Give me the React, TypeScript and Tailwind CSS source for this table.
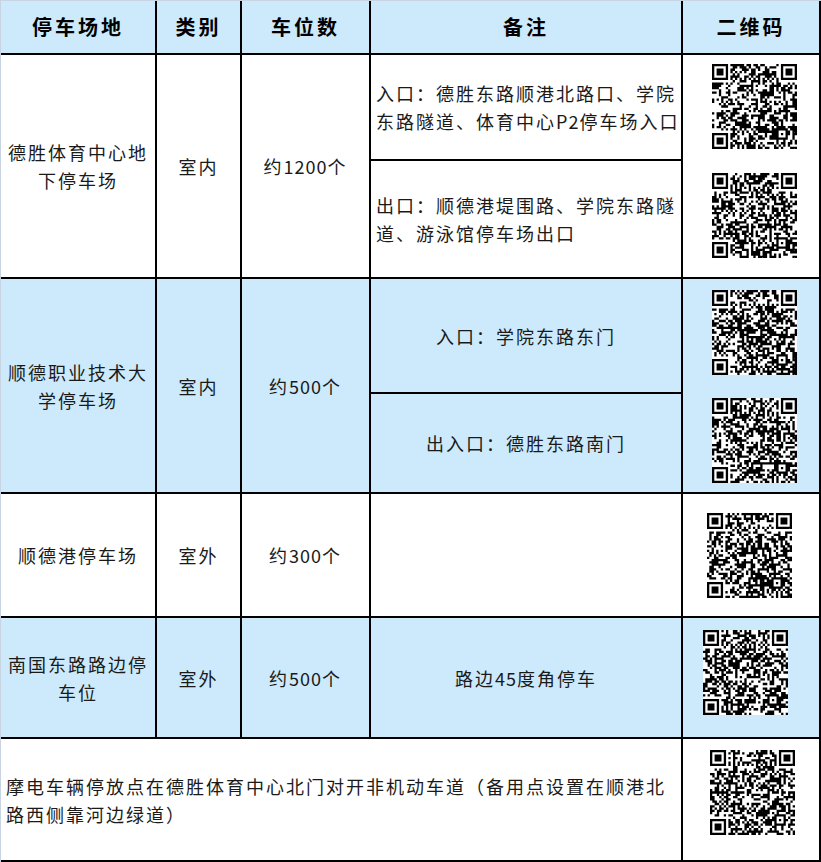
import React from "react";

// small seeded rng so the fake qr codes stay the same each render
function rng(seed: number) {
  let a = seed;
  return () => {
    a |= 0;
    a = (a + 0x6d2b79f5) | 0;
    let t = Math.imul(a ^ (a >>> 15), 1 | a);
    t = (t + Math.imul(t ^ (t >>> 7), 61 | t)) ^ t;
    return ((t ^ (t >>> 14)) >>> 0) / 4294967296;
  };
}

const N = 37;

function buildQr(seed: number) {
  const r = rng(seed);
  const m: (boolean | null)[][] = Array.from({ length: N }, () => Array(N).fill(null));
  const finder = (ox: number, oy: number) => {
    for (let y = -1; y <= 7; y++)
      for (let x = -1; x <= 7; x++) {
        const px = ox + x;
        const py = oy + y;
        if (px < 0 || py < 0 || px >= N || py >= N) continue;
        const inside = x >= 0 && x <= 6 && y >= 0 && y <= 6;
        const ring = inside && (x === 0 || x === 6 || y === 0 || y === 6);
        const core = x >= 2 && x <= 4 && y >= 2 && y <= 4;
        m[py][px] = ring || core;
      }
  };
  finder(0, 0);
  finder(N - 7, 0);
  finder(0, N - 7);
  for (let i = 8; i < N - 8; i++) {
    m[6][i] = i % 2 === 0;
    m[i][6] = i % 2 === 0;
  }
  const a = N - 7;
  for (let y = -2; y <= 2; y++)
    for (let x = -2; x <= 2; x++) {
      const d = Math.max(Math.abs(x), Math.abs(y));
      m[a + y][a + x] = d !== 1;
    }
  for (let y = 0; y < N; y++)
    for (let x = 0; x < N; x++) if (m[y][x] === null) m[y][x] = r() > 0.47;
  let d = "";
  for (let y = 0; y < N; y++)
    for (let x = 0; x < N; x++) if (m[y][x]) d += `M${x} ${y}h1v1h-1z`;
  return d;
}

function Qr({ seed }: { seed: number }) {
  const d = React.useMemo(() => buildQr(seed), [seed]);
  return (
    <svg width="85" height="85" viewBox={`0 0 ${N} ${N}`} className="block">
      <rect width={N} height={N} fill="#fff" />
      <path d={d} fill="#000" />
    </svg>
  );
}

// latin/digit runs get less tracking, like in the sheet
function T({ children }: { children: string }) {
  const parts = children.split(/([A-Za-z0-9]+)/);
  return (
    <>
      {parts.map((p, i) =>
        /^[A-Za-z0-9]+$/.test(p) ? (
          <span key={i} className="tracking-[1px]">
            {p}
          </span>
        ) : (
          <React.Fragment key={i}>{p}</React.Fragment>
        )
      )}
    </>
  );
}

const cell = "border-r-2 border-b-2 border-black";
const center = "flex items-center justify-center text-center";
const blue = "bg-[#cdeafc]";

export default function App() {
  return (
    <div
      className="w-[821px] h-[862px] bg-white text-[#1a1a1a] text-[18px] tracking-[2px] leading-[28px]"
      style={{ fontFamily: '"Noto Sans CJK SC", "Noto Sans", sans-serif' }}
    >
      <div className="grid grid-cols-[156px_85px_129px_312px_138px] grid-rows-[54px_106px_118px_115px_100px_124px_121px_123px] border-t border-l border-[#c8d4e2] box-content w-[820px]">
        {/* header */}
        {["停车场地", "类别", "车位数", "备注", "二维码"].map((h) => (
          <div key={h} className={`${cell} ${center} ${blue} text-[20px] font-bold tracking-[3px] text-black`}>
            {h}
          </div>
        ))}

        {/* 德胜体育中心 */}
        <div className={`${cell} ${center} row-span-2`}>
          德胜体育中心地
          <br />
          下停车场
        </div>
        <div className={`${cell} ${center} row-span-2`}>室内</div>
        <div className={`${cell} ${center} row-span-2`}>
          <T>约1200个</T>
        </div>
        <div className={`${cell} flex items-center pl-[5px] whitespace-nowrap`}>
          <span>
            入口：德胜东路顺港北路口、学院
            <br />
            <T>东路隧道、体育中心P2停车场入口</T>
          </span>
        </div>
        <div className={`${cell} row-span-2 flex flex-col items-start pl-[29px] pt-[9px] gap-[24px]`}>
          <Qr seed={11} />
          <Qr seed={23} />
        </div>
        <div className={`${cell} flex items-center pl-[5px] col-start-4 whitespace-nowrap`}>
          <span>
            出口：顺德港堤围路、学院东路隧
            <br />
            道、游泳馆停车场出口
          </span>
        </div>

        {/* 顺德职业技术大学 */}
        <div className={`${cell} ${center} ${blue} row-span-2`}>
          顺德职业技术大
          <br />
          学停车场
        </div>
        <div className={`${cell} ${center} ${blue} row-span-2`}>室内</div>
        <div className={`${cell} ${center} ${blue} row-span-2`}>
          <T>约500个</T>
        </div>
        <div className={`${cell} ${center} ${blue}`}>入口：学院东路东门</div>
        <div className={`${cell} ${blue} row-span-2 flex flex-col items-start pl-[29px] pt-[11px] gap-[23px]`}>
          <Qr seed={37} />
          <Qr seed={41} />
        </div>
        <div className={`${cell} ${center} ${blue} col-start-4`}>出入口：德胜东路南门</div>

        {/* 顺德港 */}
        <div className={`${cell} ${center}`}>顺德港停车场</div>
        <div className={`${cell} ${center}`}>室外</div>
        <div className={`${cell} ${center}`}>
          <T>约300个</T>
        </div>
        <div className={cell}></div>
        <div className={`${cell} flex items-start pl-[24px] pt-[19px]`}>
          <Qr seed={53} />
        </div>

        {/* 南国东路 */}
        <div className={`${cell} ${center} ${blue}`}>
          南国东路路边停
          <br />
          车位
        </div>
        <div className={`${cell} ${center} ${blue}`}>室外</div>
        <div className={`${cell} ${center} ${blue}`}>
          <T>约500个</T>
        </div>
        <div className={`${cell} ${center} ${blue}`}>
          <T>路边45度角停车</T>
        </div>
        <div className={`${cell} ${blue} flex items-start pl-[20px] pt-[12px]`}>
          <Qr seed={67} />
        </div>

        {/* 摩电车 */}
        <div className={`${cell} col-span-4 flex items-center pl-[5px] whitespace-nowrap`}>
          <span>
            摩电车辆停放点在德胜体育中心北门对开非机动车道（备用点设置在顺港北
            <br />
            路西侧靠河边绿道）
          </span>
        </div>
        <div className={`${cell} flex items-start pl-[27px] pt-[11px]`}>
          <Qr seed={79} />
        </div>
      </div>
    </div>
  );
}
